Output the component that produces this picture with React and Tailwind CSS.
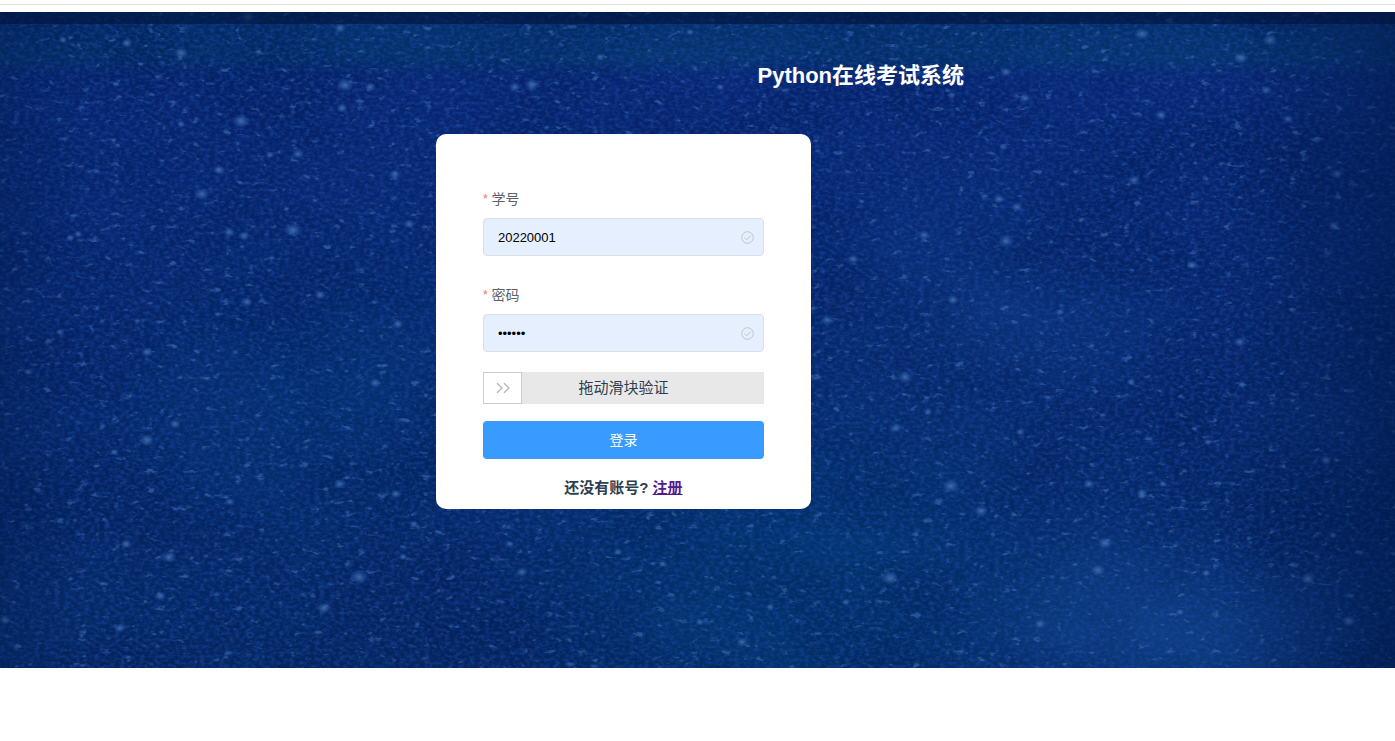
import { useState } from 'react';

// [x, y, radius]
const STARS = [
  [248, 5, 5], [127, 31, 4], [181, 41, 5], [63, 28, 3], [340, 16, 4], [345, 73, 6], [370, 75, 4], [342, 96, 4],
  [241, 109, 6], [181, 112, 3], [270, 143, 3], [298, 142, 4], [219, 158, 4], [202, 182, 5], [395, 162, 4],
  [293, 218, 6], [229, 220, 4], [244, 224, 4], [409, 212, 4], [70, 226, 3], [78, 222, 3], [320, 283, 4],
  [247, 290, 4], [147, 340, 4], [60, 320, 3], [398, 312, 4], [375, 371, 4], [28, 360, 3], [175, 412, 4],
  [147, 428, 5], [114, 440, 3], [340, 472, 4], [396, 482, 4], [230, 490, 3], [414, 512, 3], [126, 532, 4],
  [169, 545, 5], [359, 565, 6], [160, 584, 4], [324, 596, 5], [120, 616, 4], [5, 608, 4], [403, 545, 3],
  [532, 73, 5], [515, 75, 4], [600, 45, 3], [690, 20, 3], [720, 75, 3], [510, 532, 3], [522, 560, 4],
  [618, 540, 3], [663, 552, 3], [700, 610, 3], [742, 630, 4], [770, 595, 3], [890, 566, 6], [846, 590, 3],
  [853, 247, 4], [924, 223, 4], [953, 288, 4], [827, 308, 4], [905, 365, 5], [928, 400, 3], [896, 416, 4],
  [951, 474, 6], [981, 499, 5], [1105, 531, 5], [1040, 612, 4], [1089, 472, 4], [1142, 481, 4], [1163, 472, 3],
  [1098, 558, 5], [1142, 484, 3], [1206, 561, 3], [1308, 567, 5], [1349, 609, 5], [1333, 523, 3],
  [1142, 22, 5], [1270, 28, 5], [1241, 46, 5], [1266, 78, 4], [1006, 60, 4], [1025, 86, 4], [1288, 107, 4],
  [1161, 103, 4], [1134, 168, 4], [999, 187, 4], [1017, 195, 4], [1006, 229, 5], [1334, 214, 4], [1337, 162, 4],
  [1192, 253, 4], [1060, 300, 3], [1240, 330, 4], [1131, 370, 3], [1242, 373, 3], [1326, 448, 4], [1020, 420, 3],
  [1208, 430, 3], [1180, 600, 3],
];

function StarrySky() {
  return (
    <svg
      className="absolute inset-0 h-full w-full"
      viewBox="0 0 1395 656"
      preserveAspectRatio="xMidYMid slice"
      aria-hidden="true"
    >
      <defs>
        <linearGradient id="sky" x1="0" y1="0" x2="0" y2="1">
          <stop offset="0" stopColor="#052e69" />
          <stop offset="0.07" stopColor="#05336c" />
          <stop offset="0.1" stopColor="#082672" />
          <stop offset="0.4" stopColor="#07266c" />
          <stop offset="0.7" stopColor="#062867" />
          <stop offset="1" stopColor="#052862" />
        </linearGradient>
        <radialGradient id="glow">
          <stop offset="0" stopColor="#15509c" stopOpacity="0.6" />
          <stop offset="1" stopColor="#15509c" stopOpacity="0" />
        </radialGradient>
        <radialGradient id="teal">
          <stop offset="0" stopColor="#003e74" stopOpacity="0.7" />
          <stop offset="1" stopColor="#003e74" stopOpacity="0" />
        </radialGradient>
        <radialGradient id="star">
          <stop offset="0" stopColor="#4473ac" stopOpacity="0.9" />
          <stop offset="0.4" stopColor="#3a67aa" stopOpacity="0.6" />
          <stop offset="1" stopColor="#2a5cb0" stopOpacity="0" />
        </radialGradient>
        <linearGradient id="edges" x1="0" y1="0" x2="1" y2="0">
          <stop offset="0" stopColor="#001848" stopOpacity="0.3" />
          <stop offset="0.06" stopColor="#001848" stopOpacity="0" />
          <stop offset="0.88" stopColor="#001848" stopOpacity="0" />
          <stop offset="1" stopColor="#001848" stopOpacity="0.55" />
        </linearGradient>
        <filter id="clouds" x="0" y="0" width="100%" height="100%" colorInterpolationFilters="sRGB">
          <feTurbulence type="fractalNoise" baseFrequency="0.006 0.009" numOctaves="5" seed="8" />
          <feColorMatrix values="0 0 0 0 0  0 0 0 0 0.09  0 0 0 0 0.3  1.8 0 0 0 -0.65" />
        </filter>
        <filter id="grain" x="0" y="0" width="100%" height="100%" colorInterpolationFilters="sRGB">
          <feTurbulence type="fractalNoise" baseFrequency="0.2 0.3" numOctaves="3" seed="3" />
          <feColorMatrix values="0 0 0 0 0.1  0 0 0 0 0.28  0 0 0 0 0.64  2 0 0 0 -0.75" />
        </filter>
        <filter id="specks" x="0" y="0" width="100%" height="100%" colorInterpolationFilters="sRGB">
          <feTurbulence type="fractalNoise" baseFrequency="0.09 0.16" numOctaves="3" seed="21" />
          <feColorMatrix values="0 0 0 0 0.24  0 0 0 0 0.41  0 0 0 0 0.68  0 6 0 0 -3.95" />
        </filter>
      </defs>
      <rect width="1395" height="656" fill="url(#sky)" />
      <ellipse cx="1140" cy="620" rx="240" ry="140" fill="url(#glow)" />
      <ellipse cx="790" cy="560" rx="330" ry="200" fill="url(#teal)" />
      <ellipse cx="330" cy="380" rx="260" ry="200" fill="url(#teal)" opacity="0.5" />
      <ellipse cx="980" cy="320" rx="220" ry="180" fill="url(#glow)" opacity="0.5" />
      <rect width="1395" height="656" filter="url(#clouds)" opacity="0.5" />
      <rect width="1395" height="656" filter="url(#grain)" opacity="0.7" />
      <rect width="1395" height="656" filter="url(#specks)" opacity="0.65" />
      {STARS.map(([x, y, r]) => (
        <ellipse key={`${x}-${y}`} cx={x} cy={y} rx={r * 1.5} ry={r * 1.2} fill="url(#star)" />
      ))}
      <rect width="1395" height="656" fill="url(#edges)" />
      <rect width="1395" height="12" fill="#02123a" opacity="0.6" />
    </svg>
  );
}

function CheckIcon() {
  return (
    <svg
      className="h-[13px] w-[13px] shrink-0 text-[#c0c4cc]"
      viewBox="0 0 13 13"
      fill="none"
      stroke="currentColor"
      aria-hidden="true"
    >
      <circle cx="6.5" cy="6.5" r="5.8" />
      <path d="M3.4 6.6l2.4 2.3 4-4.4" />
    </svg>
  );
}

function Field({ id, label, type, value, onChange }) {
  return (
    <div className="mb-5">
      <label htmlFor={id} className="flex h-[38px] items-center gap-1 text-sm text-[#606266]">
        <span className="text-xs text-[#f56c6c]">*</span>
        {label}
      </label>
      <div className="flex h-[38px] items-center rounded-[4px] border border-[#dcdfe6] bg-[#e6effd] pr-[9px] pl-[14px]">
        <input
          id={id}
          type={type}
          value={value}
          onChange={(e) => onChange(e.target.value)}
          className="h-full min-w-0 flex-1 bg-transparent text-[13px] text-black outline-none"
        />
        <CheckIcon />
      </div>
    </div>
  );
}

function DragVerify() {
  const [progress, setProgress] = useState(0);

  return (
    <div className="grid h-8 items-center bg-[#e8e8e8]">
      <input
        id="verify"
        type="range"
        min="0"
        max="100"
        value={progress}
        onChange={(e) => setProgress(Number(e.target.value))}
        className="col-start-1 row-start-1 h-8 w-full cursor-pointer appearance-none bg-transparent outline-none [&::-webkit-slider-thumb]:h-8 [&::-webkit-slider-thumb]:w-[39px] [&::-webkit-slider-thumb]:appearance-none [&::-webkit-slider-thumb]:border [&::-webkit-slider-thumb]:border-[#cccccc] [&::-webkit-slider-thumb]:bg-white"
      />
      <label
        htmlFor="verify"
        className="pointer-events-none col-start-1 row-start-1 text-center text-[15px] text-[#2c3e50]"
      >
        拖动滑块验证
      </label>
      <div
        className="pointer-events-none col-start-1 row-start-1"
        style={{ paddingLeft: `calc((100% - 39px) * ${progress / 100})` }}
      >
        <svg
          className="ml-[13px] h-[12px] w-[14px] text-[#b4b4b4]"
          viewBox="0 0 14 12"
          fill="none"
          stroke="currentColor"
          strokeWidth="1.2"
          aria-hidden="true"
        >
          <path d="M1 1.2l5 4.8-5 4.8M8 1.2l5 4.8-5 4.8" />
        </svg>
      </div>
    </div>
  );
}

function LoginCard() {
  const [studentId, setStudentId] = useState('20220001');
  const [password, setPassword] = useState('123456');

  return (
    <form
      onSubmit={(e) => e.preventDefault()}
      className="ml-[31.25%] w-[375px] rounded-[10px] bg-white px-[47px] pt-[46px] pb-[11px]"
    >
      <Field id="studentId" label="学号" type="text" value={studentId} onChange={setStudentId} />
      <Field id="password" label="密码" type="password" value={password} onChange={setPassword} />
      <DragVerify />
      <button
        type="submit"
        className="mt-[17px] h-[38px] w-full cursor-pointer rounded-[4px] bg-[#399aff] text-sm text-white"
      >
        登录
      </button>
      <p className="mt-[19px] text-center text-[15px] leading-5 font-bold text-[#2c3e50]">
        还没有账号?{' '}
        <a href="#register" className="text-[#551a8b] underline">
          注册
        </a>
      </p>
    </form>
  );
}

export default function App() {
  return (
    <div className="bg-white font-['Liberation_Sans','Noto_Sans_CJK_SC',sans-serif]">
      <header className="h-3">
        <div className="h-[5px] border-b border-[#dedede]" />
      </header>
      <main className="relative overflow-hidden bg-[#08306f] pt-12 pb-[159px]">
        <StarrySky />
        <div className="relative">
          <h1 className="mb-[42px] ml-[54.3%] text-[22px] leading-8 font-bold text-white">Python在线考试系统</h1>
          <LoginCard />
        </div>
      </main>
    </div>
  );
}
